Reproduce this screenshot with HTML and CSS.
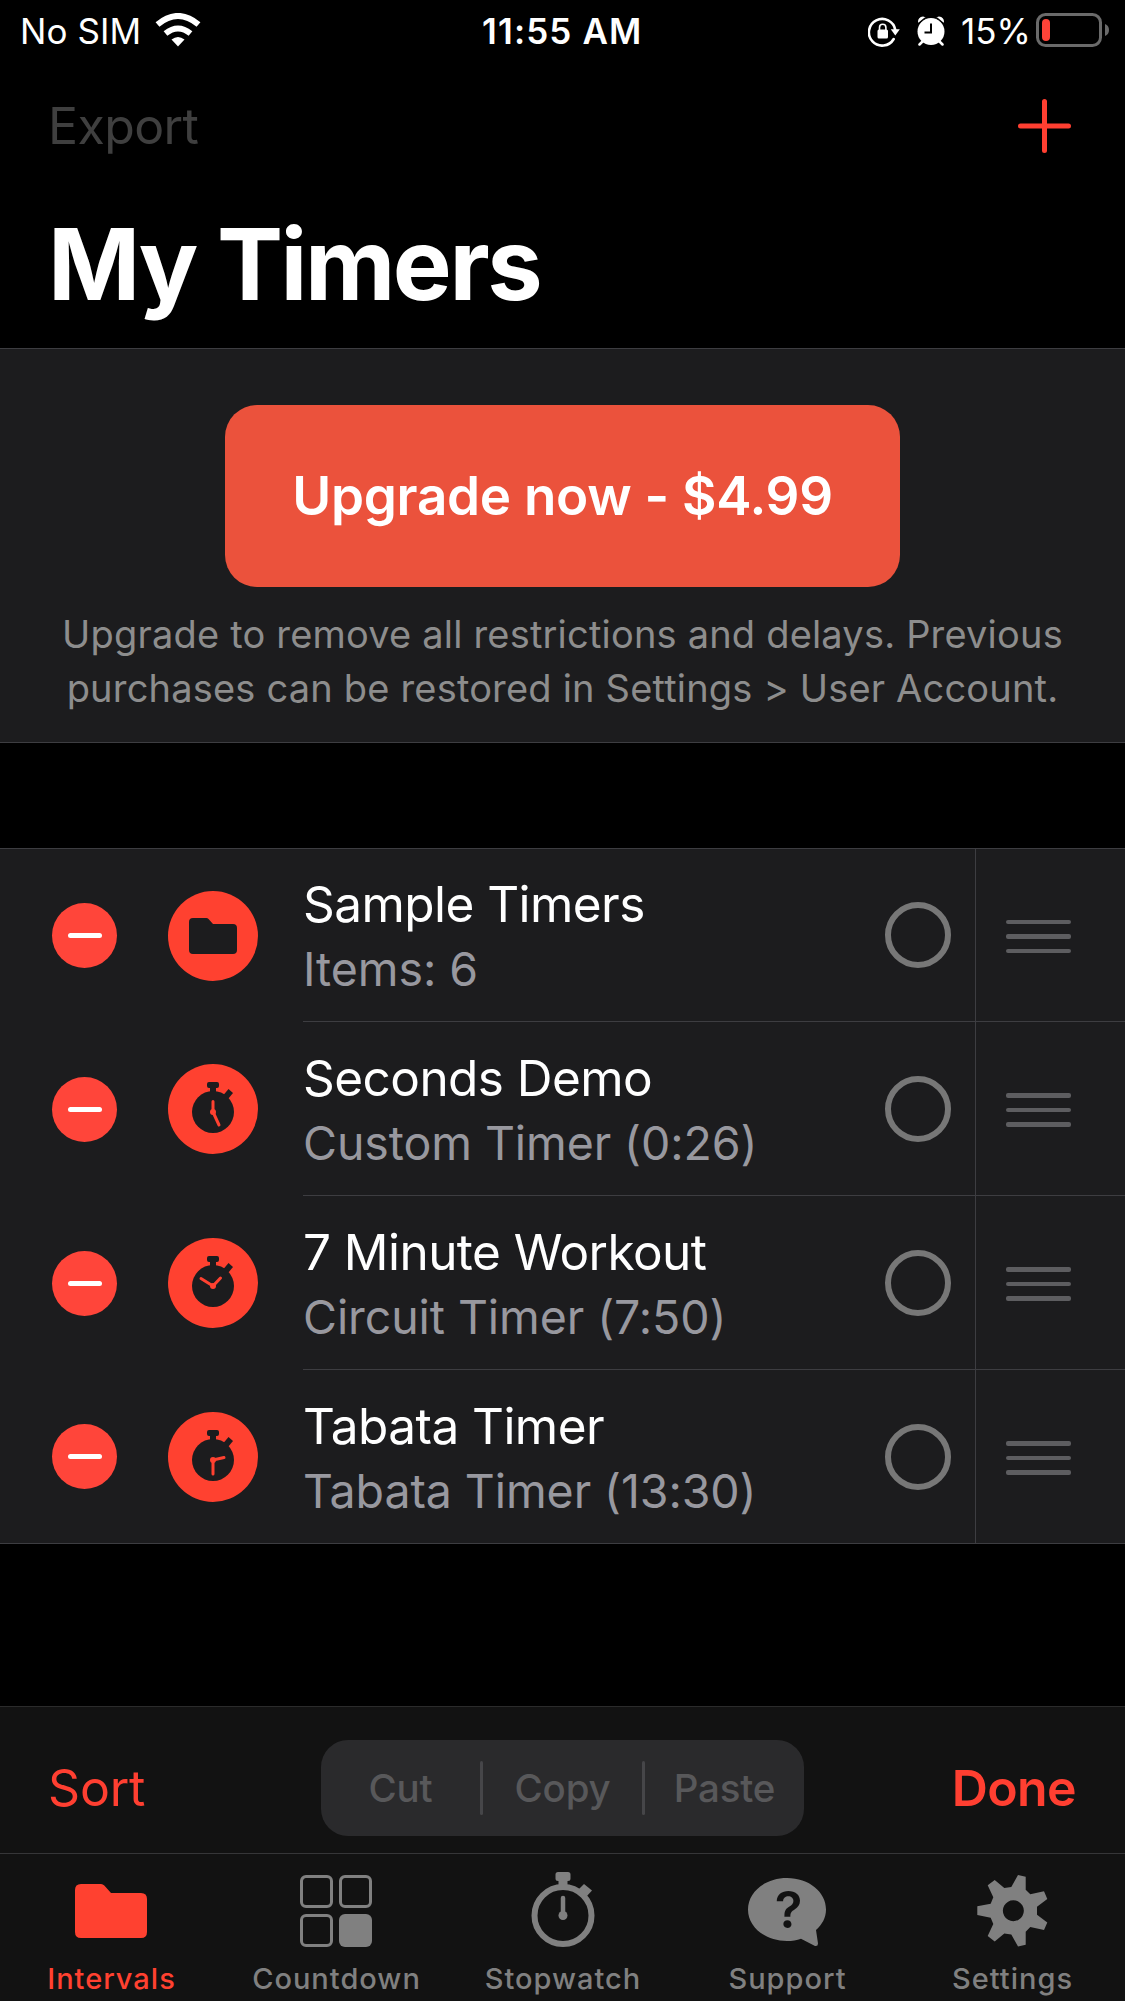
FILE: index.html
```html
<!DOCTYPE html>
<html lang="en">
<head>
<meta charset="utf-8">
<title>My Timers</title>
<link rel="stylesheet" href="styles.css">
</head>
<body>
<svg class="defs" aria-hidden="true">
  <symbol id="folder" viewBox="0 0 72 54"><path d="M6 0h20q2 0 3.300 1.600L36 9h30q6 0 6 6v33q0 6-6 6H6q-6 0-6-6V6Q0 0 6 0z"/></symbol>
  <symbol id="watch" viewBox="0 0 90 90">
    <path d="M41 18h8q2 0 2 2v2q0 2-2 2h-1v4h-6v-4h-1q-2 0-2-2v-2q0-2 2-2z"/>
    <path d="M60.500 25l4.500 4-5 6-4.500-4z"/>
    <circle cx="45" cy="48" r="21"/>
  </symbol>
</svg>
<div class="screen">
  <header class="status">
    <span class="carrier">No SIM</span>
    <svg class="wifi" width="46" height="34" viewBox="0 0 46 34"><path d="M23 33.500l-6.500-7q6.500-5 13 0z" fill="#fff"/><path d="M10.500 20.500q12.500-10 25 0M2.500 11.500q20.500-17 41 0" fill="none" stroke="#fff" stroke-width="6"/></svg>
    <span class="clock">11:55 AM</span>
    <svg class="lock" width="32" height="30" viewBox="0 0 32 30"><path d="M25.700 22A13.300 13.300 0 1 1 27.300 13" fill="none" stroke="#fff" stroke-width="2.600" stroke-linecap="round"/><path d="M22.800 12.300h9L27.300 18.500z" fill="#fff"/><rect x="9.500" y="12.500" width="10.500" height="9" rx="1.500" fill="#fff"/><path d="M11.500 13v-2.500a3.200 3.200 0 0 1 6.400 0V13" fill="none" stroke="#fff" stroke-width="1.600"/></svg>
    <svg class="alarm" width="28" height="30" viewBox="0 0 28 30"><g fill="#fff"><circle cx="14" cy="15.500" r="13.500"/><path d="M1 6Q1 1 6 .500q2 0 2.500 1.500L2.500 6.500q-1 .500-1.500-.500zM27 6Q27 1 22 .500q-2 0-2.500 1.500l6 4.500q1 .500 1.500-.500z"/></g><path d="M2.500 28.500l4-4M25.500 28.500l-4-4" stroke="#fff" stroke-width="2.500" stroke-linecap="round"/><path d="M8 2l-6 5M20 2l6 5" stroke="#000" stroke-width="1.200"/><path d="M14 7.500v9H7.500" fill="none" stroke="#000" stroke-width="2"/></svg>
    <span class="percent">15%</span>
    <svg class="battery" width="74" height="34" viewBox="0 0 74 34"><rect x="1.500" y="1.500" width="63" height="31" rx="8" fill="none" stroke="#6a6a6a" stroke-width="3"/><path d="M69 11q4 1.500 4 6t-4 6z" fill="#6a6a6a"/><rect x="6" y="6" width="8" height="22" rx="4" fill="#ff4338"/></svg>
  </header>
  <nav class="navbar">
    <span class="export">Export</span>
    <svg width="54" height="56" viewBox="0 0 54 56"><path d="M27.500 3.500v49M3.500 28h48" stroke="#ff3f31" stroke-width="5" stroke-linecap="round"/></svg>
  </nav>
  <h1>My Timers</h1>
  <section class="banner">
    <button class="upgrade">Upgrade now - $4.99</button>
    <p>Upgrade to remove all restrictions and delays. Previous<br>purchases can be restored in Settings &gt; User Account.</p>
  </section>
  <ul class="list">
    <li class="row">
      <span class="minus"></span>
      <svg class="badge" viewBox="0 0 90 90"><circle cx="45" cy="45" r="45" fill="#ff4130"/><use href="#folder" x="21" y="27" width="48" height="36"/></svg>
      <div class="info"><div class="text"><div class="name">Sample Timers</div><div class="sub">Items: 6</div></div><span class="radio"></span><span class="grip"><i></i><i></i><i></i></span></div>
    </li>
    <li class="row">
      <span class="minus"></span>
      <svg class="badge" viewBox="0 0 90 90"><circle cx="45" cy="45" r="45" fill="#ff4130"/><use href="#watch" width="90" height="90"/><g class="hands"><circle cx="45" cy="48" r="3"/><path d="M45 48V37.500M45 48l6 13"/></g></svg>
      <div class="info"><div class="text"><div class="name">Seconds Demo</div><div class="sub">Custom Timer (0:26)</div></div><span class="radio"></span><span class="grip"><i></i><i></i><i></i></span></div>
    </li>
    <li class="row">
      <span class="minus"></span>
      <svg class="badge" viewBox="0 0 90 90"><circle cx="45" cy="45" r="45" fill="#ff4130"/><use href="#watch" width="90" height="90"/><g class="hands"><circle cx="45" cy="48" r="3"/><path d="M45 48l-12-7.500M45 48l7.500-8"/></g></svg>
      <div class="info"><div class="text"><div class="name">7 Minute Workout</div><div class="sub">Circuit Timer (7:50)</div></div><span class="radio"></span><span class="grip"><i></i><i></i><i></i></span></div>
    </li>
    <li class="row">
      <span class="minus"></span>
      <svg class="badge" viewBox="0 0 90 90"><circle cx="45" cy="45" r="45" fill="#ff4130"/><use href="#watch" width="90" height="90"/><g class="hands"><circle cx="45" cy="48" r="3"/><path d="M45 48v14M45 48l11-2.500"/></g></svg>
      <div class="info"><div class="text"><div class="name">Tabata Timer</div><div class="sub">Tabata Timer (13:30)</div></div><span class="radio"></span><span class="grip"><i></i><i></i><i></i></span></div>
    </li>
  </ul>
  <div class="toolbar">
    <span class="sort">Sort</span>
    <div class="segments"><span>Cut</span><i></i><span>Copy</span><i></i><span>Paste</span></div>
    <span class="done">Done</span>
  </div>
  <footer class="tabs">
    <div class="tab active"><svg viewBox="0 0 90 78"><use href="#folder" x="9" y="12" width="72" height="54"/></svg><span>Intervals</span></div>
    <div class="tab"><svg viewBox="0 0 90 78"><g fill="none" stroke="currentColor" stroke-width="3"><rect x="10.500" y="4.500" width="30" height="30" rx="4.500"/><rect x="49.500" y="4.500" width="30" height="30" rx="4.500"/><rect x="10.500" y="43.500" width="30" height="30" rx="4.500"/></g><rect x="48" y="42" width="33" height="33" rx="6"/></svg><span>Countdown</span></div>
    <div class="tab"><svg viewBox="0 0 90 78"><circle cx="45" cy="43.500" r="28.500" fill="none" stroke="currentColor" stroke-width="6"/><path d="M40 0h10q2.500 0 2.500 2.500V6.500Q52.500 9 50 9h-.5v6h-9V9H40q-2.500 0-2.500-2.500v-4Q37.500 0 40 0z"/><path d="M66 12l8 6.500-6 6.500-8-7z"/><path d="M45 26v17" stroke="currentColor" stroke-width="4.500" stroke-linecap="round"/><circle cx="45" cy="43.500" r="4.500"/></svg><span>Stopwatch</span></div>
    <div class="tab"><svg viewBox="0 0 90 78"><path d="M45 6C67 6 84 20 84 37.500c0 8.500-4 15-10 20.500l2 13.500q0 3-3 2.500l-14-7.300c-4 1.500-9 2.300-14 2.300C23 69 6 55 6 37.500S23 6 45 6z"/><text x="46.500" y="56" text-anchor="middle" class="question">?</text></svg><span>Support</span></div>
    <div class="tab"><svg viewBox="0 0 90 78"><path fill-rule="evenodd" d="M51 3l7.700 1.700v13l4.600 4.600L77 19.300l3.300 7.700L70 34.700v8l10.300 7.700-3.300 7.700-13.700-3-4.600 4.600v13L51 74.400l-6.700-12-7-1-9.600 8-7-5.300 5.600-12-2.600-6.400-13.400-2.600v-8.800l13.400-2.600 2.600-6.400-5.600-12 7-5.300 9.600 8 7-1zM46.300 28.200a10.500 10.500 0 1 0 .1 0z"/></svg><span>Settings</span></div>
  </footer>
</div>
</body>
</html>
```
FILE: styles.css
```css
* { box-sizing: border-box; }
body { margin: 0; background: #000; font-family: Inter, "Liberation Sans", sans-serif; color: #fff; }
.defs { position: absolute; width: 0; height: 0; }
.screen { width: 1125px; height: 2001px; display: flex; flex-direction: column; overflow: hidden; white-space: nowrap; }
.status { display: grid; grid-template-columns: 155px 327px 386px 49px 44px 75px 74px; height: 62px; font-size: 35px; line-height: 63px; flex: none; align-items: start; }
.carrier { padding-left: 20px; letter-spacing: 0.1px; }
.wifi { margin-top: 13px; }
.clock { font-weight: 600; letter-spacing: 1.150px; }
.lock { margin-top: 17px; }
.alarm { margin-top: 16px; }
.battery { margin-top: 13px; }
.navbar { height: 128px; flex: none; display: flex; justify-content: space-between; padding: 0 54px 0 48px; font-size: 50px; align-items: center; color: #3f3f3f; letter-spacing: -0.600px; }
h1 { margin: 0; height: 158px; flex: none; padding-left: 48px; font-size: 99px; line-height: 148px; font-weight: 700; letter-spacing: -2.450px; }
.banner { height: 395px; flex: none; background: #1c1c1e; border: solid #3d3d41; border-width: 1px 0; padding-top: 56px; text-align: center; }
.upgrade { display: block; width: 675px; height: 182px; margin: 0 auto; border: 0; border-radius: 32px; padding: 0; background: #eb523c; color: #fff; font: 600 53px Inter, sans-serif; letter-spacing: -0.280px; }
.banner p { margin: 20px 0 0; font-size: 38px; line-height: 54px; color: #8d8d8d; letter-spacing: 0.190px; }
.list { list-style: none; margin: 105px 0 0; padding: 0; border: solid #3d3d41; border-width: 1px 0; background: #1c1c1e; flex: none; }
.row { height: 174px; display: flex; align-items: center; padding-left: 52px; }
.row:first-child, .row:last-child { height: 173px; }
.minus { width: 65px; height: 65px; border-radius: 50%; background: #ff453a; display: flex; align-items: center; justify-content: center; }
.minus::after { content: ""; width: 34px; height: 5px; border-radius: 2.500px; background: #fff; }
.badge { width: 90px; height: 90px; margin: 0 45px 0 51px; fill: #1c1c1e; }
.hands { fill: #ff4130; stroke: #ff4130; stroke-width: 3; stroke-linecap: round; }
.hands circle { stroke: none; }
.info { flex: 1; align-self: stretch; display: flex; align-items: center; border-bottom: 1px solid #3d3d41; }
.row:last-child .info { border: 0; }
.text { width: 582px; padding-top: 4px; }
.name { font-size: 49.500px; line-height: 64px; letter-spacing: -0.550px; }
.sub { font-size: 46.500px; line-height: 66px; color: #98989f; letter-spacing: -0.080px; }
.radio { width: 66px; height: 66px; border: 6px solid #777; border-radius: 50%; }
.grip { margin-left: 24px; height: 100%; flex: 1; border-left: 1px solid #3d3d41; padding-left: 30px; display: flex; flex-direction: column; justify-content: center; gap: 10px; padding-top: 3px; }
.grip i { width: 65px; height: 4.500px; border-radius: 2px; background: #5d5d60; }
.toolbar { margin-top: auto; height: 147px; flex: none; background: #121212; border-top: 1px solid #2b2b2b; display: flex; align-items: center; color: #ff3f31; font-size: 50px; padding: 16px 49px 0 48px; }
.sort { width: 273px; letter-spacing: -0.200px; }
.segments { width: 483px; height: 96px; border-radius: 27px; background: #2a2a2c; color: #58585a; font-size: 38.500px; font-weight: 500; display: grid; grid-template-columns: 1fr 3px 1fr 3px 1fr; align-items: center; text-align: center; letter-spacing: -0.200px; }
.segments i { height: 54px; background: #464649; border-radius: 2px; }
.done { font-weight: 600; margin-left: auto; letter-spacing: -0.600px; }
.tabs { height: 148px; flex: none; background: #121212; border-top: 1px solid #363638; display: grid; grid-template-columns: 222px 228px 225px 224px 226px; color: #808080; fill: currentColor; font-size: 29px; font-weight: 500; }
.tab { display: flex; flex-direction: column; align-items: center; padding-top: 18px; }
.tab svg { width: 90px; height: 78px; }
.tab span { margin-top: 10px; padding-left: 1px; line-height: 38px; letter-spacing: 1px; }
.active { color: #ff4130; }
.question { font: 600 51px Inter, sans-serif; fill: #121212; }
```
